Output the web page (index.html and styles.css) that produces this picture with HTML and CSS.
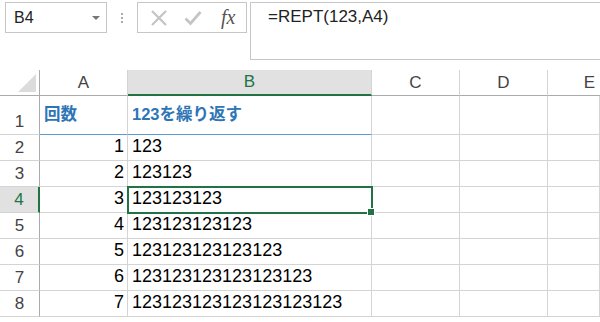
FILE: index.html
```html
<!DOCTYPE html>
<html lang="ja">
<head>
  <meta charset="UTF-8" />
  <title>REPT</title>
  <link rel="stylesheet" href="styles.css">
</head>
<body>

  <!-- Formula bar -->
  <div class="formula-bar">
    <div class="name-box">
      <span>B4</span>
      <span class="arrow"></span>
    </div>
    <div class="grip"><i></i><i></i><i></i></div>
    <div class="icon-box">
      <svg width="18" height="18" viewBox="0 0 18 18"><path d="M2 2 L16 16 M16 2 L2 16" stroke="#c4c4c4" stroke-width="2.2" fill="none"/></svg>
      <svg width="18" height="18" viewBox="0 0 18 18"><path d="M1.5 9.5 L6.5 14.5 L16.5 3" stroke="#c4c4c4" stroke-width="2.8" fill="none"/></svg>
      <span class="fx">fx</span>
    </div>
    <div class="formula">=REPT(123,A4)</div>
  </div>

  <!-- Sheet -->
  <div class="sheet">
    <div class="corner"><span class="tri"></span></div>
    <div class="col-head">A</div>
    <div class="col-head selected">B</div>
    <div class="col-head">C</div>
    <div class="col-head">D</div>
    <div class="col-head">E</div>

    <div class="row-head tall">1</div>
    <div class="cell title">回数</div>
    <div class="cell title left">123を繰り返す</div>
    <div class="cell"></div><div class="cell"></div><div class="cell"></div>

    <div class="row-head">2</div>
    <div class="cell num">1</div>
    <div class="cell left">123</div>
    <div class="cell"></div><div class="cell"></div><div class="cell"></div>

    <div class="row-head">3</div>
    <div class="cell num">2</div>
    <div class="cell left">123123</div>
    <div class="cell"></div><div class="cell"></div><div class="cell"></div>

    <div class="row-head selected">4</div>
    <div class="cell num">3</div>
    <div class="cell left active">123123123<span class="handle"></span></div>
    <div class="cell"></div><div class="cell"></div><div class="cell"></div>

    <div class="row-head">5</div>
    <div class="cell num">4</div>
    <div class="cell left">123123123123</div>
    <div class="cell"></div><div class="cell"></div><div class="cell"></div>

    <div class="row-head">6</div>
    <div class="cell num">5</div>
    <div class="cell left">123123123123123</div>
    <div class="cell"></div><div class="cell"></div><div class="cell"></div>

    <div class="row-head">7</div>
    <div class="cell num">6</div>
    <div class="cell left">123123123123123123</div>
    <div class="cell"></div><div class="cell"></div><div class="cell"></div>

    <div class="row-head">8</div>
    <div class="cell num">7</div>
    <div class="cell left">123123123123123123123</div>
    <div class="cell"></div><div class="cell"></div><div class="cell"></div>
  </div>

</body>
</html>
```

FILE: styles.css
```css
body {
  margin: 0;
  width: 600px;
  height: 322px;
  overflow: hidden;
  background: #fff;
  font-family: "Liberation Sans", Arial, sans-serif;
  color: #000;
}

/* Formula bar */
.formula-bar {
  display: flex;
  align-items: flex-start;
  height: 70px;
  padding-top: 2px;
  box-sizing: border-box;
}

.name-box {
  margin-left: 5px;
  width: 102px;
  height: 31px;
  box-sizing: border-box;
  border: 1px solid #c6c6c6;
  display: flex;
  align-items: center;
  justify-content: space-between;
  padding: 0 6px 0 8px;
  font-size: 16px;
  color: #222;
}

.name-box .arrow {
  width: 0;
  height: 0;
  border-left: 4px solid transparent;
  border-right: 4px solid transparent;
  border-top: 4px solid #777;
}

.grip {
  width: 30px;
  height: 31px;
  display: flex;
  flex-direction: column;
  align-items: center;
  justify-content: center;
  gap: 2px;
}

.grip i {
  width: 2px;
  height: 2px;
  background: #aaa;
}

.icon-box {
  width: 110px;
  height: 31px;
  box-sizing: border-box;
  border: 1px solid #c6c6c6;
  display: flex;
  align-items: center;
  padding-left: 12px;
  gap: 16px;
}

.fx {
  font-family: "Liberation Serif", serif;
  font-style: italic;
  font-size: 20px;
  color: #555;
  margin-left: 3px;
}

.formula {
  margin-left: 3px;
  flex: 1;
  height: 58px;
  box-sizing: border-box;
  border: 1px solid #c6c6c6;
  border-right: none;
  padding: 4px 0 0 17px;
  font-size: 17px;
  color: #222;
}

/* Sheet grid */
.sheet {
  display: grid;
  width: 600px;
  height: 252px;
  overflow: hidden;
  grid-template-columns: 40px 88px 244px 88px 88px 52px;
  grid-template-rows: 26px 39px repeat(7, 26px) 6px;
}

.corner,
.col-head,
.row-head,
.cell {
  box-sizing: border-box;
  border-right: 1px solid #d4d4d4;
  border-bottom: 1px solid #d4d4d4;
}

.corner {
  border-bottom-color: #ababab;
  border-right-color: #ababab;
  position: relative;
}

.corner .tri {
  position: absolute;
  right: 3px;
  bottom: 3px;
  width: 18px;
  height: 18px;
  background: #dcdcdc;
  clip-path: polygon(100% 0, 100% 100%, 0 100%);
}

.col-head {
  border-bottom-color: #ababab;
  display: flex;
  align-items: center;
  justify-content: center;
  font-size: 17px;
  color: #444;
}

.col-head:nth-child(6) {
  border-right: none;
  justify-content: flex-end;
  padding-right: 5px;
}

.col-head.selected {
  background: #e1e1e1;
  border-bottom: 2px solid #217346;
  color: #217346;
}

.row-head {
  border-right-color: #ababab;
  display: flex;
  align-items: flex-end;
  justify-content: center;
  padding-bottom: 2px;
  font-size: 17px;
  color: #444;
}

.row-head.selected {
  background: #e1e1e1;
  border-right: 2px solid #217346;
  color: #217346;
}

.cell {
  display: flex;
  align-items: flex-end;
  padding: 0 3px 3px 4px;
  font-size: 18px;
  white-space: nowrap;
}

.cell.num {
  justify-content: flex-end;
}

.cell.title {
  align-items: center;
  padding-bottom: 4px;
  border-bottom: 1px solid #5b9bd5;
  font-family: "Liberation Sans", "Noto Sans CJK JP", sans-serif;
  font-weight: bold;
  font-size: 16.5px;
  color: #2e75b6;
}

.cell.active {
  position: relative;
  outline: 2px solid #217346;
  outline-offset: -1px;
  z-index: 1;
}

.handle {
  position: absolute;
  right: -4px;
  bottom: -4px;
  width: 6px;
  height: 6px;
  background: #217346;
  border: 1px solid #fff;
}
```
